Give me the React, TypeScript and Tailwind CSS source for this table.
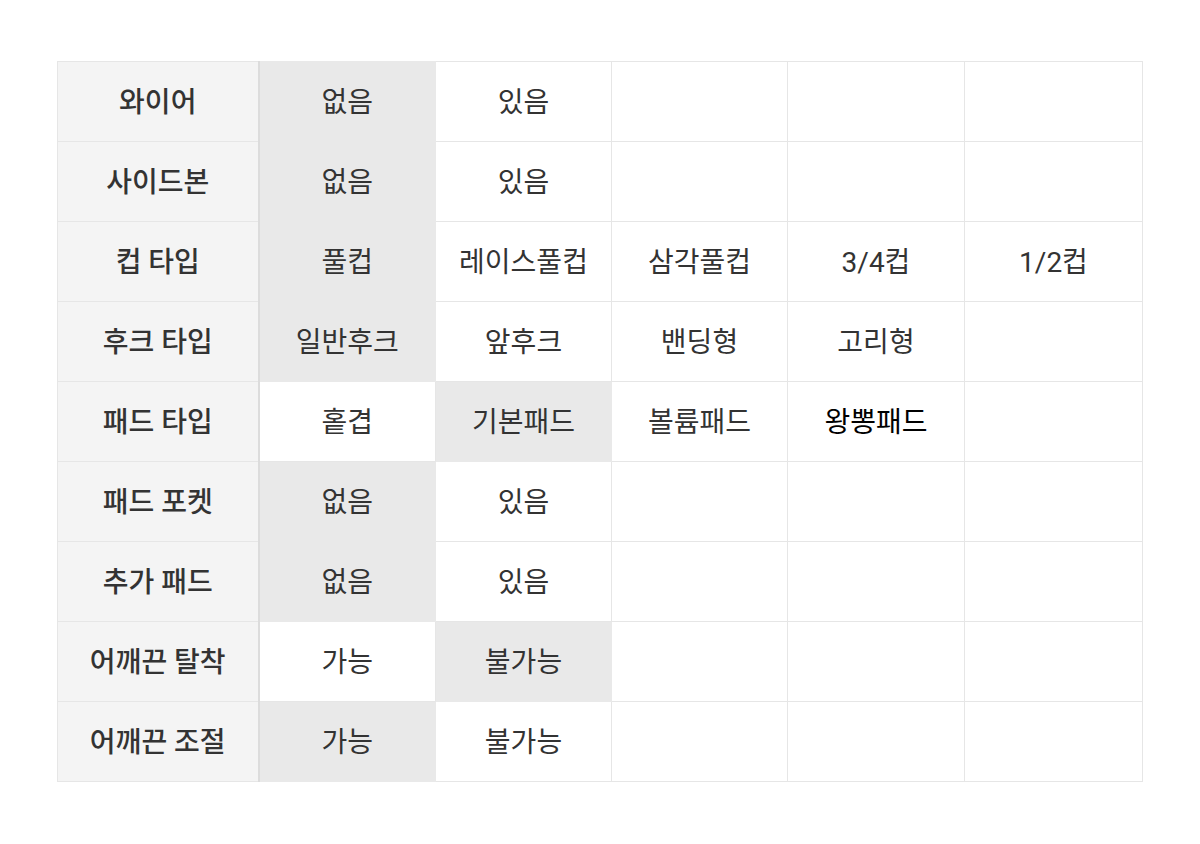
import React from "react";

type Row = { label: string; options: string[]; selected: number };

const rows: Row[] = [
  { label: "와이어", options: ["없음", "있음"], selected: 0 },
  { label: "사이드본", options: ["없음", "있음"], selected: 0 },
  { label: "컵 타입", options: ["풀컵", "레이스풀컵", "삼각풀컵", "3/4컵", "1/2컵"], selected: 0 },
  { label: "후크 타입", options: ["일반후크", "앞후크", "밴딩형", "고리형"], selected: 0 },
  { label: "패드 타입", options: ["홑겹", "기본패드", "볼륨패드", "왕뽕패드"], selected: 1 },
  { label: "패드 포켓", options: ["없음", "있음"], selected: 0 },
  { label: "추가 패드", options: ["없음", "있음"], selected: 0 },
  { label: "어깨끈 탈착", options: ["가능", "불가능"], selected: 1 },
  { label: "어깨끈 조절", options: ["가능", "불가능"], selected: 0 },
];

const App = () => {
  return (
    <div
      className="min-h-[844px] w-full bg-white pt-[61px] pl-[57px]"
      style={{ fontFamily: 'Roboto, "Noto Sans CJK KR", "Noto Sans", sans-serif' }}
    >
      <table className="w-[1086px] table-fixed border-collapse border border-[#e6e6e6] text-[28px] text-[#333333]">
        <colgroup>
          <col className="w-[201px]" />
          <col className="w-[177px]" />
          <col className="w-[176px]" />
          <col className="w-[176px]" />
          <col className="w-[177px]" />
          <col />
        </colgroup>
        <tbody>
          {rows.map((row) => (
            <tr key={row.label} className="h-[80px]">
              <th className="border border-[#e6e6e6] border-r-2 border-r-[#dcdcdc] bg-[#f4f4f4] pt-[3px] text-center font-medium">
                {row.label}
              </th>
              {[0, 1, 2, 3, 4].map((i) => {
                const text = row.options[i] ?? "";
                const isSel = i === row.selected;
                return (
                  <td
                    key={i}
                    className={
                      isSel
                        ? "border border-[#e9e9e9] bg-[#e9e9e9] pt-[3px] text-center"
                        : text === "왕뽕패드"
                        ? "border border-[#e6e6e6] bg-white pt-[3px] text-center text-black"
                        : "border border-[#e6e6e6] bg-white pt-[3px] text-center"
                    }
                  >
                    {text}
                  </td>
                );
              })}
            </tr>
          ))}
        </tbody>
      </table>
    </div>
  );
};

export default App;
